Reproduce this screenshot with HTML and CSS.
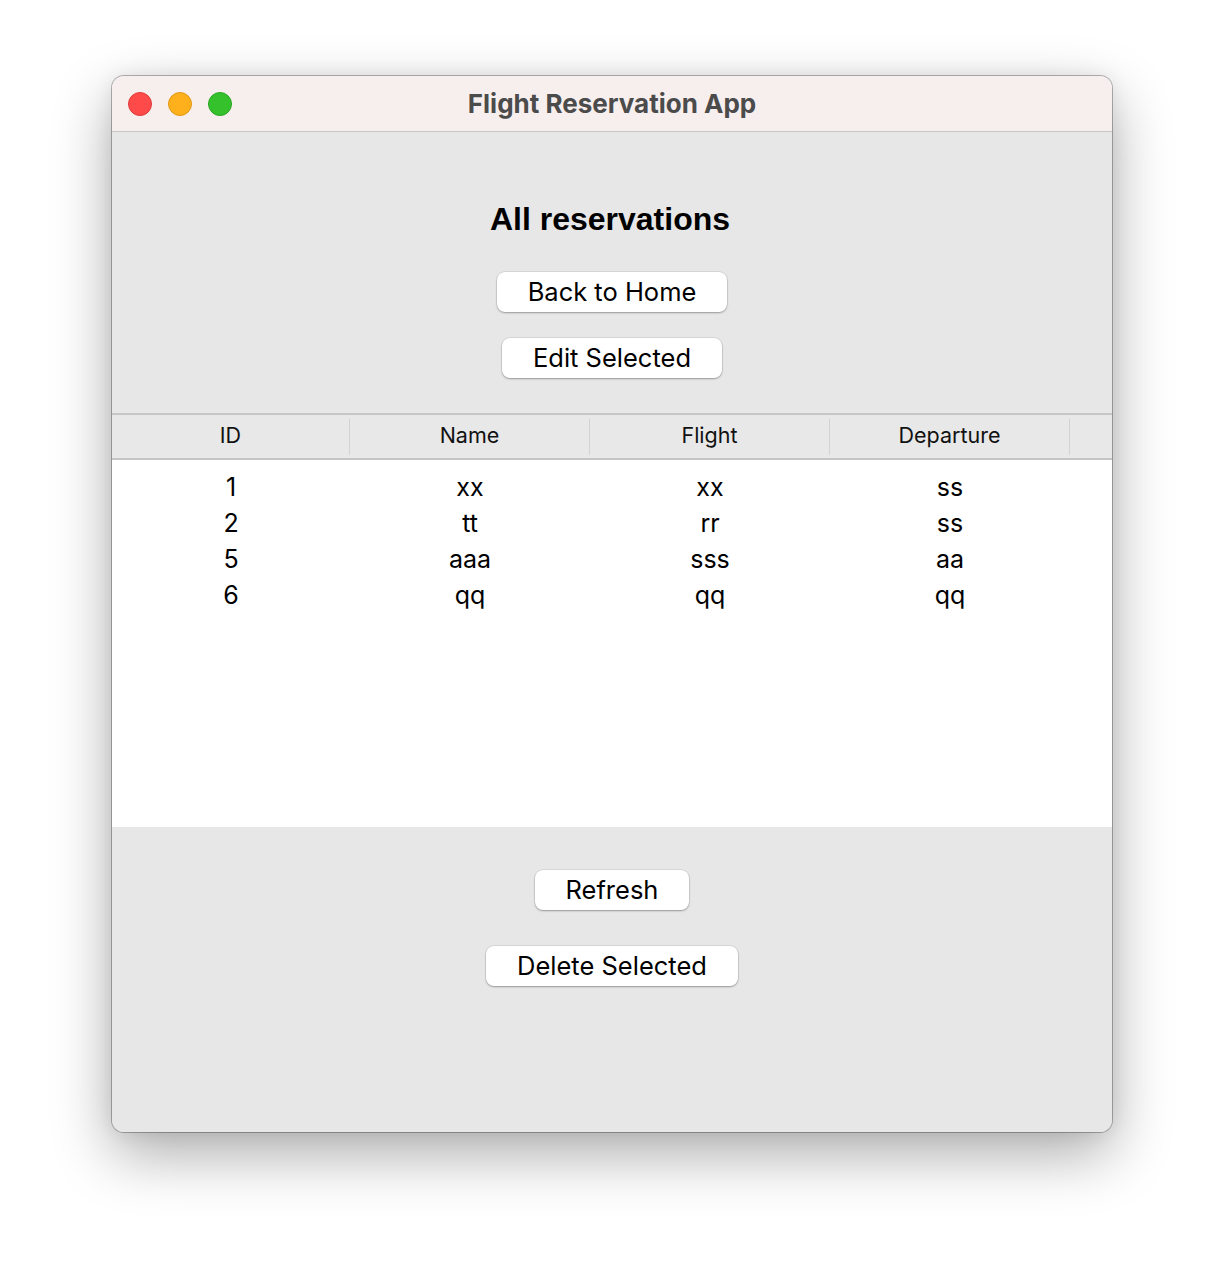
FILE: index.html
```html
<!DOCTYPE html>
<html>
<head>
<meta charset="utf-8">
<link rel="stylesheet" href="styles.css">
</head>
<body>
<div class="window">
  <div class="titlebar">
    <div class="lights">
      <span class="light red"></span>
      <span class="light yellow"></span>
      <span class="light green"></span>
    </div>
    <div class="title">Flight Reservation App</div>
  </div>
  <div class="content">
    <h1 class="heading">All reservations</h1>
    <div class="btn-stack top">
      <button class="btn">Back to Home</button>
      <button class="btn">Edit Selected</button>
    </div>
    <div class="table">
      <div class="thead">
        <div class="th">ID</div>
        <div class="th">Name</div>
        <div class="th">Flight</div>
        <div class="th">Departure</div>
        <div class="th last"></div>
      </div>
      <div class="tbody">
        <div class="tr"><div class="td">1</div><div class="td">xx</div><div class="td">xx</div><div class="td">ss</div></div>
        <div class="tr"><div class="td">2</div><div class="td">tt</div><div class="td">rr</div><div class="td">ss</div></div>
        <div class="tr"><div class="td">5</div><div class="td">aaa</div><div class="td">sss</div><div class="td">aa</div></div>
        <div class="tr"><div class="td">6</div><div class="td">qq</div><div class="td">qq</div><div class="td">qq</div></div>
      </div>
    </div>
    <div class="btn-stack bottom">
      <button class="btn">Refresh</button>
      <button class="btn">Delete Selected</button>
    </div>
  </div>
</div>
</body>
</html>
```

FILE: styles.css
```css
html, body {
  margin: 0;
  padding: 0;
  background: #ffffff;
}
body {
  font-family: Inter, "Liberation Sans", sans-serif;
  color: #000;
  min-height: 1280px;
  padding-top: 76px;
  box-sizing: border-box;
}
.window {
  width: 1000px;
  height: 1056px;
  margin: 0 auto;
  border-radius: 12px;
  box-shadow: 0 0 0 1px rgba(0,0,0,0.28), 0 22px 60px rgba(0,0,0,0.33), 0 0 20px rgba(0,0,0,0.08);
  overflow: hidden;
  display: flex;
  flex-direction: column;
  background: #e7e7e7;
}
.titlebar {
  height: 56px;
  flex: none;
  background: #f7efee;
  border-bottom: 1px solid #c9c6c6;
  box-sizing: border-box;
  display: flex;
  align-items: center;
  justify-content: center;
  position: relative;
}
.lights {
  position: absolute;
  left: 16px;
  top: 16px;
  display: flex;
  gap: 16px;
}
.light {
  width: 24px;
  height: 24px;
  border-radius: 50%;
  box-sizing: border-box;
}
.red { background: #fe4b4a; border: 1px solid #e0393a; }
.yellow { background: #feaf1c; border: 1px solid #e09a17; }
.green { background: #35c12c; border: 1px solid #2aa524; }
.title {
  font-size: 26px;
  font-weight: 700;
  color: #4b4b4b;
  margin-top: -1px;
}
.content {
  flex: 1;
  display: flex;
  flex-direction: column;
  align-items: center;
  background: #e7e7e7;
}
.heading {
  margin: 68px 4px 0 0;
  font-family: "Liberation Sans", Arial, sans-serif;
  font-size: 32px;
  line-height: 38px;
  font-weight: 700;
}
.btn-stack {
  display: flex;
  flex-direction: column;
  align-items: center;
  gap: 26px;
}
.btn-stack.top { margin-top: 34px; }
.btn-stack.bottom { margin-top: 43px; gap: 36px; }
.btn {
  font-family: Inter, "Liberation Sans", sans-serif;
  font-size: 25.5px;
  height: 40px;
  line-height: 40px;
  padding: 0 31px;
  background: #ffffff;
  border: none;
  border-radius: 8px;
  box-shadow: 0 0 0 0.5px rgba(0,0,0,0.12), 0 1px 2px rgba(0,0,0,0.3);
  color: #000;
}
.table {
  align-self: stretch;
  margin-top: 35px;
}
.thead {
  display: flex;
  height: 47px;
  box-sizing: border-box;
  border-top: 2px solid #c6c6c6;
  border-bottom: 2px solid #c6c6c6;
  background: #e8e8e8;
  align-items: center;
}
.th {
  width: 240px;
  height: 36px;
  line-height: 32px;
  padding-bottom: 4px;
  text-align: center;
  font-size: 21.5px;
  color: #111;
  border-right: 1px solid #d2d2d2;
  box-sizing: border-box;
}
.th:first-child { width: 238px; }
.th.last { flex: 1; border-right: none; }
.tbody {
  background: #ffffff;
  height: 367px;
  padding-top: 9px;
  box-sizing: border-box;
}
.tr {
  display: flex;
  height: 36px;
  align-items: center;
}
.td {
  width: 240px;
  text-align: center;
  font-size: 25px;
}
.td:first-child { width: 238px; }
```
